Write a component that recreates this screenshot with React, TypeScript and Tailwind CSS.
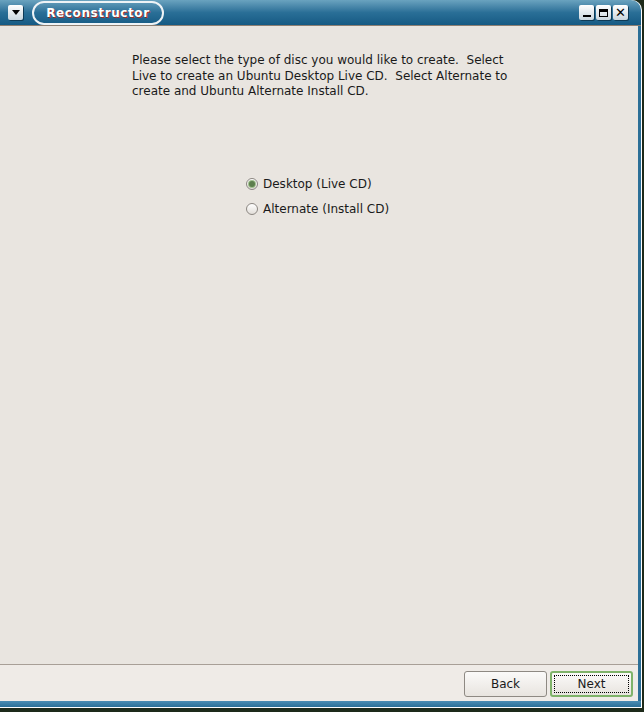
import React from "react";

const font = { fontFamily: "Tahoma, 'DejaVu Sans', 'Liberation Sans', sans-serif" };

function TitleButton({ children }: { children: React.ReactNode }) {
  return (
    <div className="w-[15px] h-[15px] rounded-[2px] bg-gradient-to-b from-white to-[#c9d6de] shadow-[1px_1px_0_#0d3a56] flex items-center justify-center">
      {children}
    </div>
  );
}

function Radio({ checked, label }: { checked?: boolean; label: string }) {
  return (
    <div className="flex items-center gap-[5px] h-[25px]">
      <div className="w-[12px] h-[12px] rounded-full border border-[#8c8782] bg-gradient-to-b from-white to-[#e2ded9] flex items-center justify-center">
        {checked && <div className="w-[6px] h-[6px] rounded-full bg-[#5d7f4d] shadow-[0_0_0_1px_#9fbf8c]" />}
      </div>
      <span className="text-[12px] text-[#1a1a1a]">{label}</span>
    </div>
  );
}

export default function App() {
  return (
    <div className="w-[644px] h-[712px] bg-[#1d2a1a] flex flex-col" style={font}>
      <div className="w-[642px] flex flex-col h-[708px] bg-white pr-px pb-px rounded-tr-[10px]">
        {/* title bar */}
        <div className="h-[26px] rounded-tr-[10px] bg-gradient-to-b from-[#6aa3bf] via-[#2a6f97] to-[#155a84] flex items-center border-b border-[#8d7f72]">
          <div className="ml-[8px]">
            <TitleButton>
              <div className="w-0 h-0 border-l-[4px] border-r-[4px] border-t-[5px] border-l-transparent border-r-transparent border-t-black" />
            </TitleButton>
          </div>
          <div className="ml-[9px] h-[24px] w-[132px] rounded-[12px] border-2 border-[#eef3f6] flex items-center justify-center">
            <span className="text-white font-bold text-[12px] tracking-[0.6px] [text-shadow:1px_1px_0_#a0302a]">
              Reconstructor
            </span>
          </div>
          <div className="flex-1" />
          <div className="flex gap-[2px] mr-[13px]">
            <TitleButton>
              <div className="w-[8px] h-[2px] bg-black mt-[6px]" />
            </TitleButton>
            <TitleButton>
              <div className="w-[9px] h-[8px] border border-black border-t-[3px]" />
            </TitleButton>
            <TitleButton>
              <span className="text-black font-bold text-[13px] leading-none">✕</span>
            </TitleButton>
          </div>
        </div>

        <div className="flex-1 flex">
          <div className="flex-1 flex flex-col">
            {/* content */}
            <div className="flex-1 bg-[#e9e5e0] border-b border-[#a89f97] flex flex-col">
              <p className="ml-[132px] mt-[27px] text-[12px] leading-[15.5px] text-[#1a1a1a] whitespace-pre">
                {"Please select the type of disc you would like to create.  Select\nLive to create an Ubuntu Desktop Live CD.  Select Alternate to\ncreate and Ubuntu Alternate Install CD."}
              </p>
              <div className="ml-[246px] mt-[72px] flex flex-col">
                <Radio checked label="Desktop (Live CD)" />
                <Radio label="Alternate (Install CD)" />
              </div>
            </div>
            {/* buttons */}
            <div className="h-[36px] bg-[#efebe7] flex items-start justify-end gap-[3px] pt-[6px] pr-[5px]">
              <button className="w-[83px] h-[26px] rounded-[3px] border border-[#8e8983] bg-gradient-to-b from-[#fbfaf9] to-[#e8e4df] text-[12px] text-[#1a1a1a]">
                Back
              </button>
              <button className="w-[83px] h-[26px] rounded-[3px] border-2 border-[#7fb36a] bg-gradient-to-b from-[#fbfaf9] to-[#e8e4df] text-[12px] text-[#1a1a1a] p-[2px]">
                <div className="w-full h-full border border-dotted border-black flex items-center justify-center">Next</div>
              </button>
            </div>
          </div>
          <div className="w-[3px] bg-[#2c6f97]" />
        </div>
        <div className="h-[6px] bg-gradient-to-b from-[#4a8db4] to-[#2a6f97]" />
      </div>
    </div>
  );
}
